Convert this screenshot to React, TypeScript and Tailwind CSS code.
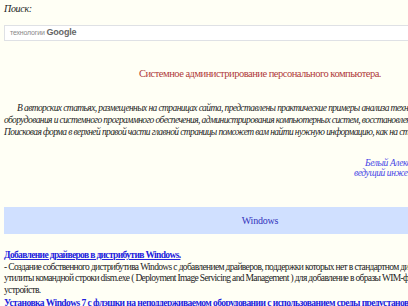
import React from 'react';

const serif = { fontFamily: '"Liberation Serif", "DejaVu Serif", serif' };

export default function App() {
  return (
    <div className="w-[408px] h-[306px] overflow-hidden bg-[#fffff5]" style={serif}>
      <div className="w-[520px] px-1 pt-[3px]">
        {/* Search */}
        <div className="italic text-[10px] tracking-[-0.3px] text-[#222] leading-[12px]">Поиск:</div>
        <div className="mt-[10px] h-[16px] border border-[#dfe1e5] bg-white flex items-center pl-[5px]">
          <span className="text-[7px] text-[#888] tracking-tight" style={{ fontFamily: '"Liberation Sans", Arial, sans-serif' }}>
            технологии <span className="text-[9px] font-bold text-[#666]">Google</span>
          </span>
        </div>

        {/* Title */}
        <div className="mt-[26px] text-center text-[10.5px] tracking-[-0.5px] text-[#b03a3a] leading-[13px]">
          Системное администрирование персонального компьютера.
        </div>

        {/* Intro */}
        <div className="mt-[22px] italic text-[9.5px] tracking-[-0.6px] leading-[12px] text-[#222] whitespace-nowrap">
          <div className="pl-[13px]">В авторских статьях, размещенных на страницах сайта, представлены практические примеры анализа технического состояния</div>
          <div>оборудования и системного программного обеспечения, администрирования компьютерных систем, восстановления данных.</div>
          <div>Поисковая форма в верхней правой части главной страницы поможет вам найти нужную информацию, как на страницах сайта.</div>
        </div>

        {/* Signature */}
        <div className="mt-[20px] italic text-[9.5px] tracking-[-0.4px] leading-[10px] text-[#4747e6] whitespace-nowrap">
          <div className="pl-[361px]">Белый Александр</div>
          <div className="pl-[350px]">ведущий инженер</div>
        </div>

        {/* Section bar */}
        <div className="mt-[29px] h-[27px] bg-[#d0e0ff] flex items-center justify-center text-[10px] tracking-[-0.2px] text-[#3333bb]">
          Windows
        </div>

        {/* Articles */}
        <div className="mt-[16px] text-[9.5px] tracking-[-0.65px] leading-[11.5px] text-[#222] whitespace-nowrap">
          <a href="#" className="font-bold underline text-[#2222dd] tracking-[-0.65px]">Добавление драйверов в дистрибутив Windows.</a>
          <div>- Создание собственного дистрибутива Windows с добавлением драйверов, поддержки которых нет в стандартном дистрибутиве, с использованием</div>
          <div>утилиты командной строки dism.exe ( Deployment Image Servicing and Management ) для добавление в образы WIM-файлов драйверов</div>
          <div>устройств.</div>
          <div className="mt-[1.5px]">
            <a href="#" className="font-bold underline text-[#2222dd] tracking-[-0.55px]">Установка Windows 7 с флэшки на неподдерживаемом оборудовании с использованием среды предустановки Windows PE.</a>
          </div>
        </div>
      </div>
    </div>
  );
}
